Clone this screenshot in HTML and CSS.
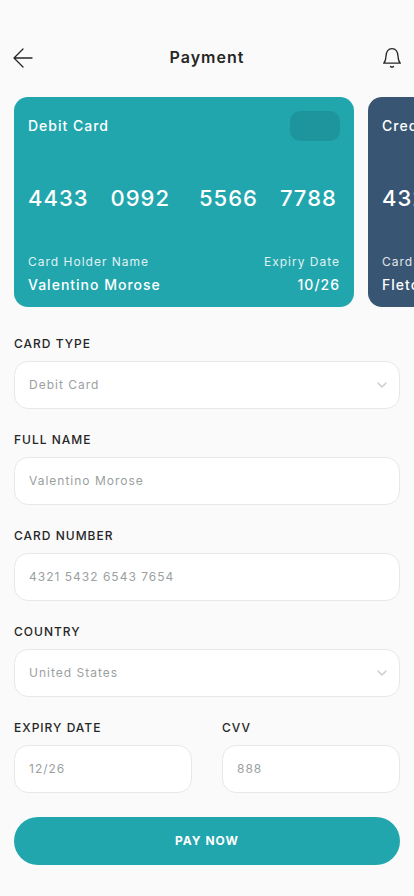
FILE: index.html
```html
<!DOCTYPE html>
<html lang="en">
<head>
<meta charset="utf-8">
<meta name="viewport" content="width=device-width, initial-scale=1">
<title>Payment</title>
<link rel="stylesheet" href="styles.css">
</head>
<body>
<header class="topbar">
  <button class="icon-button" type="button" aria-label="Back">
    <svg width="22" height="22" viewBox="0 0 22 22" fill="none" stroke="currentColor" stroke-width="1.300" stroke-linecap="round" stroke-linejoin="round"><path d="M12 2 3 11l9 9M3 11h18"/></svg>
  </button>
  <h1 class="title">Payment</h1>
  <button class="icon-button" type="button" aria-label="Notifications">
    <svg width="22" height="22" viewBox="0 0 22 22" fill="none" stroke="currentColor" stroke-width="1.300" stroke-linecap="round" stroke-linejoin="round"><path d="M2.700 16.200h16.600c-1.600-1.500-2-3.200-2.200-6.400C16.800 4.200 15.200 1.700 11 1.700S5.200 4.200 4.900 9.800C4.700 13 4.300 14.700 2.700 16.200ZM9.500 19.500c.8.900 2.200.9 3 0"/></svg>
  </button>
</header>
<main>
  <section class="cards" aria-label="Cards">
    <article class="card card-debit">
      <div class="card-row"><span class="card-kind">Debit Card</span><span class="chip"></span></div>
      <div class="card-number">
        <span class="pair"><span>4433</span><span>0992</span></span>
        <span class="pair"><span>5566</span><span>7788</span></span>
      </div>
      <div class="card-row card-details">
        <div><p class="caption">Card Holder Name</p><p class="detail">Valentino Morose</p></div>
        <div class="expiry"><p class="caption">Expiry Date</p><p class="detail">10/26</p></div>
      </div>
    </article>
    <article class="card card-credit">
      <div class="card-row"><span class="card-kind">Credit Card</span><span class="chip"></span></div>
      <div class="card-number">
        <span class="pair"><span>4321</span></span>
      </div>
      <div class="card-row card-details">
        <div><p class="caption">Card Holder Name</p><p class="detail">Fletcher</p></div>
      </div>
    </article>
  </section>
  <form class="form">
    <div class="field">
      <label for="type">CARD TYPE</label>
      <div class="select-wrap">
        <select class="control" id="type"><option>Debit Card</option></select>
        <svg class="chevron" width="10" height="6" viewBox="0 0 10 6" fill="none" stroke="currentColor" stroke-width="1.500" stroke-linecap="round" stroke-linejoin="round"><path d="m1 1 4 4 4-4"/></svg>
      </div>
    </div>
    <div class="field">
      <label for="name">FULL NAME</label>
      <input class="control" id="name" type="text" placeholder="Valentino Morose">
    </div>
    <div class="field">
      <label for="number">CARD NUMBER</label>
      <input class="control" id="number" type="text" inputmode="numeric" placeholder="4321 5432 6543 7654">
    </div>
    <div class="field">
      <label for="country">COUNTRY</label>
      <div class="select-wrap">
        <select class="control" id="country"><option>United States</option></select>
        <svg class="chevron" width="10" height="6" viewBox="0 0 10 6" fill="none" stroke="currentColor" stroke-width="1.500" stroke-linecap="round" stroke-linejoin="round"><path d="m1 1 4 4 4-4"/></svg>
      </div>
    </div>
    <div class="field-row">
      <div class="field">
        <label for="expiry">EXPIRY DATE</label>
        <input class="control" id="expiry" type="text" placeholder="12/26">
      </div>
      <div class="field">
        <label for="cvv">CVV</label>
        <input class="control" id="cvv" type="text" inputmode="numeric" placeholder="888">
      </div>
    </div>
    <button class="pay" type="submit">PAY NOW</button>
  </form>
</main>
</body>
</html>
```
FILE: styles.css
```css
* {
  box-sizing: border-box;
}

body {
  margin: 0;
  background: #fafafa;
  color: #262626;
  font-family: Inter, sans-serif;
  letter-spacing: 1px;
}

button,
input,
select {
  font: inherit;
  letter-spacing: inherit;
}

h1,
p {
  margin: 0;
}

.topbar {
  display: flex;
  align-items: center;
  justify-content: space-between;
  padding: 46px 11px 28px;
}

.icon-button {
  display: flex;
  padding: 0;
  border: 0;
  background: none;
  color: inherit;
}

.title {
  font-size: 16px;
  font-weight: 600;
  line-height: 23px;
}

.cards {
  display: flex;
  gap: 14px;
  padding: 0 14px;
  overflow-x: auto;
  scrollbar-width: none;
}

.card {
  display: flex;
  flex: 0 0 340px;
  flex-direction: column;
  justify-content: space-between;
  height: 210px;
  padding: 14px 14px 12px;
  border-radius: 14px;
  color: #fff;
}

.card-debit {
  background: #22a6ae;
}

.card-credit {
  background: #385673;
}

.card-row {
  display: flex;
  align-items: center;
  justify-content: space-between;
}

.card-kind {
  padding-bottom: 2px;
  font-size: 14px;
  font-weight: 500;
}

.chip {
  width: 50px;
  height: 30px;
  border-radius: 10px;
  background: rgb(0 0 0 / 10%);
}

.card-number {
  display: flex;
  gap: 29px;
  padding-top: 2px;
  font-size: 22px;
  font-weight: 500;
  line-height: 28px;
}

.pair {
  display: flex;
  gap: 22px;
}

.caption {
  font-size: 12px;
  line-height: 18px;
  opacity: 0.85;
}

.detail {
  margin-top: 4px;
  font-size: 14px;
  font-weight: 500;
  line-height: 20px;
}

.expiry {
  text-align: right;
}

.form {
  display: flex;
  flex-direction: column;
  gap: 22px;
  padding: 28px 14px 24px;
}

.field {
  display: flex;
  flex-direction: column;
  gap: 8px;
  min-width: 0;
}

.field label {
  font-size: 12px;
  font-weight: 500;
  line-height: 18px;
}

.field-row {
  display: grid;
  grid-template-columns: 1fr 1fr;
  gap: 30px;
}

.control {
  width: 100%;
  height: 48px;
  padding: 0 14px 2px;
  border: 1px solid #e8e8e8;
  border-radius: 14px;
  background: #fff;
  color: #9b9f9f;
  font-size: 12px;
  appearance: none;
}

.control::placeholder {
  color: #9b9f9f;
}

.select-wrap {
  position: relative;
}

.chevron {
  position: absolute;
  top: 21px;
  right: 13px;
  color: #ccc;
  pointer-events: none;
}

.pay {
  height: 48px;
  margin-top: 2px;
  padding: 0 0 2px;
  border: 0;
  border-radius: 24px;
  background: #22a6ae;
  color: #fff;
  font-size: 12px;
  font-weight: 700;
}
```
